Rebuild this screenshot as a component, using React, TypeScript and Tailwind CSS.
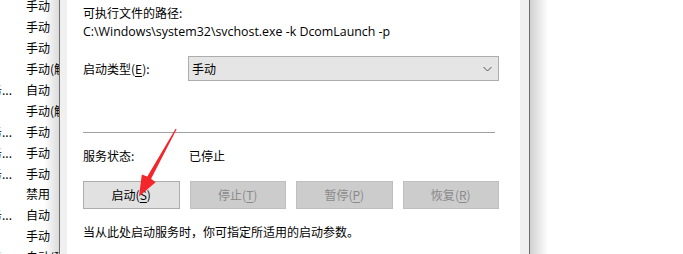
import React from 'react';

const rows = [
  { desc: '', text: '手动' },
  { desc: '', text: '手动' },
  { desc: '', text: '手动' },
  { desc: '', text: '手动(触发启动)' },
  { desc: '务...', text: '自动' },
  { desc: '', text: '手动(触发启动)' },
  { desc: '务...', text: '手动' },
  { desc: '务...', text: '手动' },
  { desc: '务...', text: '手动' },
  { desc: '', text: '禁用' },
  { desc: '务...', text: '自动' },
  { desc: '', text: '手动' },
  { desc: '务...', text: '自动(延迟启动)' },
];

const cjk = "font-['Noto_Sans_CJK_SC','Noto_Sans',sans-serif]";

function Btn({ label, hot, disabled }: { label: string; hot: string; disabled?: boolean }) {
  return (
    <div
      className={
        'h-[28px] flex items-center justify-center border text-[12px] ' +
        (disabled
          ? 'bg-[#cccccc] border-[#bfbfbf] text-[#8a8a8a]'
          : 'bg-[#e1e1e1] border-[#adadad] text-black')
      }
    >
      <span>
        {label}(<span className="underline underline-offset-2">{hot}</span>)
      </span>
    </div>
  );
}

export default function App() {
  return (
    <div className={`relative w-[683px] h-[254px] overflow-hidden bg-white flex ${cjk}`}>
      {/* background services list */}
      <div className="w-[59px] shrink-0 flex flex-col -mt-[4px]">
        {rows.map((r, i) => (
          <div key={i} className="h-[20.9px] shrink-0 flex items-center text-[12px] text-black whitespace-nowrap">
            <div className="w-[26px] shrink-0 overflow-hidden flex justify-end pr-[14px]">
              <span>{r.desc}</span>
            </div>
            <span className="overflow-hidden">{r.text}</span>
          </div>
        ))}
      </div>

      {/* dialog */}
      <div className="w-px shrink-0 bg-[#6e6e6e]" />
      <div className="w-[7px] shrink-0 bg-[#f0f0f0]" />
      <div className="w-[453px] shrink-0 bg-white pl-[16px] pr-[21px] text-[12px] text-black">
        <div className="h-[24px] pt-[4px] leading-[18px]">可执行文件的路径:</div>
        <div className="h-[20px] leading-[20px] -mt-[2px] font-['Open_Sans',sans-serif] text-[12.4px]">
          C:\Windows\system32\svchost.exe -k DcomLaunch -p
        </div>
        <div className="flex items-center mt-[14px] h-[25px]">
          <div className="w-[105px] shrink-0">
            启动类型(<span className="underline underline-offset-2">E</span>):
          </div>
          <div className="flex-1 h-[25px] bg-[#e5e5e5] border border-[#adadad] flex items-center justify-between pl-[3px] pr-[6px]">
            <span>手动</span>
            <svg width="9" height="6" viewBox="0 0 9 6">
              <path d="M0.5 1 L4.5 5 L8.5 1" fill="none" stroke="#555" strokeWidth="1" />
            </svg>
          </div>
        </div>
        <div className="h-px bg-[#a0a0a0] mt-[51px] mr-[4px]" />
        <div className="flex items-center h-[20px] mt-[13px]">
          <div className="w-[106px] shrink-0">服务状态:</div>
          <div>已停止</div>
        </div>
        <div className="grid grid-cols-4 gap-x-[10px] mt-[15px]">
          <Btn label="启动" hot="S" />
          <Btn label="停止" hot="T" disabled />
          <Btn label="暂停" hot="P" disabled />
          <Btn label="恢复" hot="R" disabled />
        </div>
        <div className="mt-[13px] leading-[20px]">当从此处启动服务时，你可指定所适用的启动参数。</div>
      </div>
      <div className="w-[9px] shrink-0 bg-[#f0f0f0]" />
      <div className="w-px shrink-0 bg-[#6e6e6e]" />
      <div className="flex-1 bg-white" />

      {/* window drop shadows */}
      <div className="absolute left-[44px] top-0 h-full w-[15px] bg-gradient-to-r from-transparent to-[#00000024] pointer-events-none" />
      <div className="absolute left-[530px] top-0 h-full w-[18px] bg-gradient-to-r from-[#0000002e] to-transparent pointer-events-none" />

      {/* red annotation arrow */}
      <svg className="absolute inset-0 pointer-events-none" width="683" height="254" viewBox="0 0 683 254">
        <polygon
          points="176.6,129.3 151.1,178.7 155.6,182.3 139,196.5 141.8,174.6 147.3,176.5 175.6,128.8"
          fill="#f2262b"
        />
      </svg>
    </div>
  );
}
